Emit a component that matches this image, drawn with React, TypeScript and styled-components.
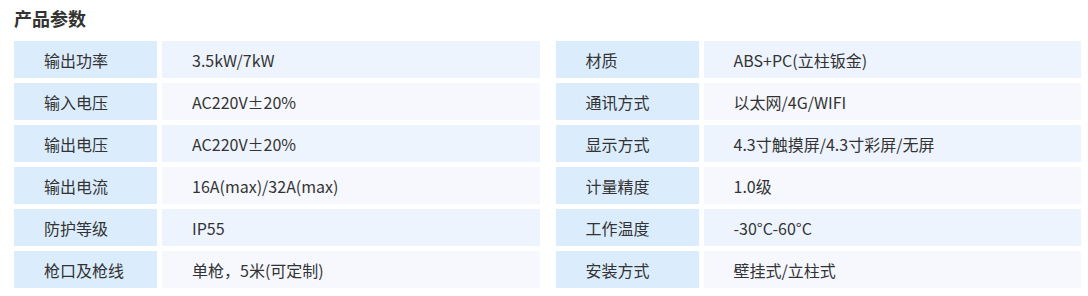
import React from 'react';
import styled, { createGlobalStyle } from 'styled-components';

const GlobalStyle = createGlobalStyle`
  html, body {
    margin: 0;
    padding: 0;
    background: #fff;
  }
  body {
    font-family: "Noto Sans CJK SC", "Noto Sans", sans-serif;
    color: #333;
  }
`;

const Section = styled.section`
  width: 1067px;
  padding: 6px 0 0 14px;
`;

const Heading = styled.h3`
  margin: 0 0 11px;
  font-size: 18px;
  line-height: 24px;
  font-weight: 700;
  color: #333;
`;

const Table = styled.div`
  display: grid;
  row-gap: 5px;
`;

const Row = styled.div`
  display: grid;
  grid-template-columns: 1fr 1fr;
  column-gap: 16px;
`;

const Pair = styled.div`
  display: grid;
  grid-template-columns: 143px 1fr;
  column-gap: 5px;
`;

const Cell = styled.div<{ $kind: 'label' | 'odd' | 'even' }>`
  height: 37px;
  display: flex;
  align-items: center;
  padding-left: 30px;
  font-size: 16px;
  color: #333;
  white-space: nowrap;
  background: ${p =>
    p.$kind === 'label' ? '#dbedfd' : p.$kind === 'odd' ? '#eef4fe' : '#f6f8fe'};
`;

const specs: [string, string, string, string][] = [
  ['输出功率', '3.5kW/7kW', '材质', 'ABS+PC(立柱钣金)'],
  ['输入电压', 'AC220V±20%', '通讯方式', '以太网/4G/WIFI'],
  ['输出电压', 'AC220V±20%', '显示方式', '4.3寸触摸屏/4.3寸彩屏/无屏'],
  ['输出电流', '16A(max)/32A(max)', '计量精度', '1.0级'],
  ['防护等级', 'IP55', '工作温度', '-30°C-60°C'],
  ['枪口及枪线', '单枪，5米(可定制)', '安装方式', '壁挂式/立柱式'],
];

export default function App() {
  return (
    <>
      <GlobalStyle />
      <Section>
        <Heading>产品参数</Heading>
        <Table>
          {specs.map((s, i) => {
            const kind = i % 2 === 0 ? 'odd' : 'even';
            return (
              <Row key={i}>
                <Pair>
                  <Cell $kind="label">{s[0]}</Cell>
                  <Cell $kind={kind}>{s[1]}</Cell>
                </Pair>
                <Pair>
                  <Cell $kind="label">{s[2]}</Cell>
                  <Cell $kind={kind}>{s[3]}</Cell>
                </Pair>
              </Row>
            );
          })}
        </Table>
      </Section>
    </>
  );
}
